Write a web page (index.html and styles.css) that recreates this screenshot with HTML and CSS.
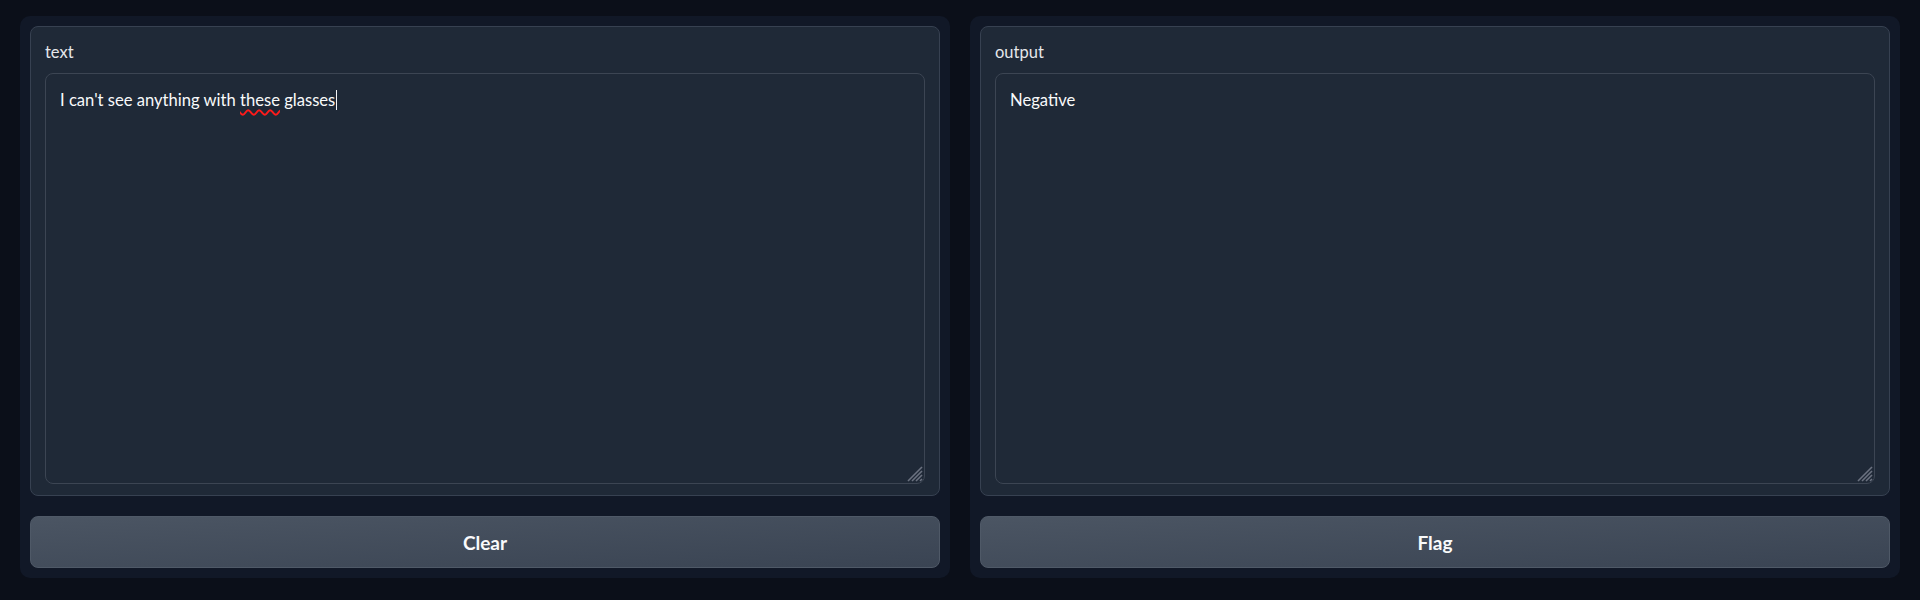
FILE: index.html
```html
<!DOCTYPE html>
<html lang="en">
<head>
<meta charset="utf-8">
<title>Interface</title>
<link rel="stylesheet" href="styles.css">
</head>
<body>
<main class="app">
  <section class="panel">
    <div class="block">
      <label class="label">text</label>
      <div class="box">
        <div class="box-text">I can't see anything with <span class="misspelled">these</span> glasses<span class="caret"></span></div>
        <svg class="grip" width="18" height="18" viewBox="0 0 18 18"><g stroke="#6b7280" stroke-width="1.6"><line x1="17" y1="3" x2="3" y2="17"/><line x1="17" y1="7" x2="7" y2="17"/><line x1="17" y1="11" x2="11" y2="17"/><line x1="17" y1="15" x2="15" y2="17"/></g></svg>
      </div>
    </div>
    <button class="btn">Clear</button>
  </section>
  <section class="panel">
    <div class="block">
      <label class="label">output</label>
      <div class="box">
        <div class="box-text">Negative</div>
        <svg class="grip" width="18" height="18" viewBox="0 0 18 18"><g stroke="#6b7280" stroke-width="1.6"><line x1="17" y1="3" x2="3" y2="17"/><line x1="17" y1="7" x2="7" y2="17"/><line x1="17" y1="11" x2="11" y2="17"/><line x1="17" y1="15" x2="15" y2="17"/></g></svg>
      </div>
    </div>
    <button class="btn">Flag</button>
  </section>
</main>
</body>
</html>
```
FILE: styles.css
```css
html, body {
  margin: 0;
  padding: 0;
  background: #0b0f19;
  font-family: Lato, "Noto Sans", sans-serif;
}
.app {
  display: grid;
  grid-template-columns: 1fr 1fr;
  gap: 20px;
  padding: 16px 20px 0;
}
.panel {
  background: #111827;
  border-radius: 10px;
  padding: 10px;
  display: flex;
  flex-direction: column;
  gap: 20px;
}
.block {
  background: #1f2937;
  border: 1px solid #374151;
  border-radius: 8px;
  padding: 15px 14px 11px;
  display: flex;
  flex-direction: column;
}
.label {
  color: #e5e7eb;
  font-size: 16.5px;
  line-height: 20px;
  margin-bottom: 11px;
}
.box {
  position: relative;
  border: 1px solid #3c4553;
  border-radius: 8px;
  background: #1f2937;
  padding: 14px 14px;
  box-sizing: content-box;
  height: 381px;
}
.box-text {
  color: #f9fafb;
  font-size: 16.6px;
  line-height: 24px;
}
.misspelled {
  text-decoration: underline wavy #ff1a1a;
  text-decoration-thickness: 1.5px;
  text-underline-offset: 3px;
}
.caret {
  display: inline-block;
  width: 1px;
  height: 20px;
  background: #f3f4f6;
  vertical-align: -4px;
  margin-left: 1px;
}
.grip {
  position: absolute;
  right: 1px;
  bottom: 1px;
}
.btn {
  height: 52px;
  border: 1px solid #4f5967;
  border-radius: 8px;
  background: linear-gradient(to bottom right, #4b5563, #3a4453);
  color: #f9fafb;
  font-family: inherit;
  font-weight: 700;
  font-size: 19px;
  cursor: pointer;
}
```
